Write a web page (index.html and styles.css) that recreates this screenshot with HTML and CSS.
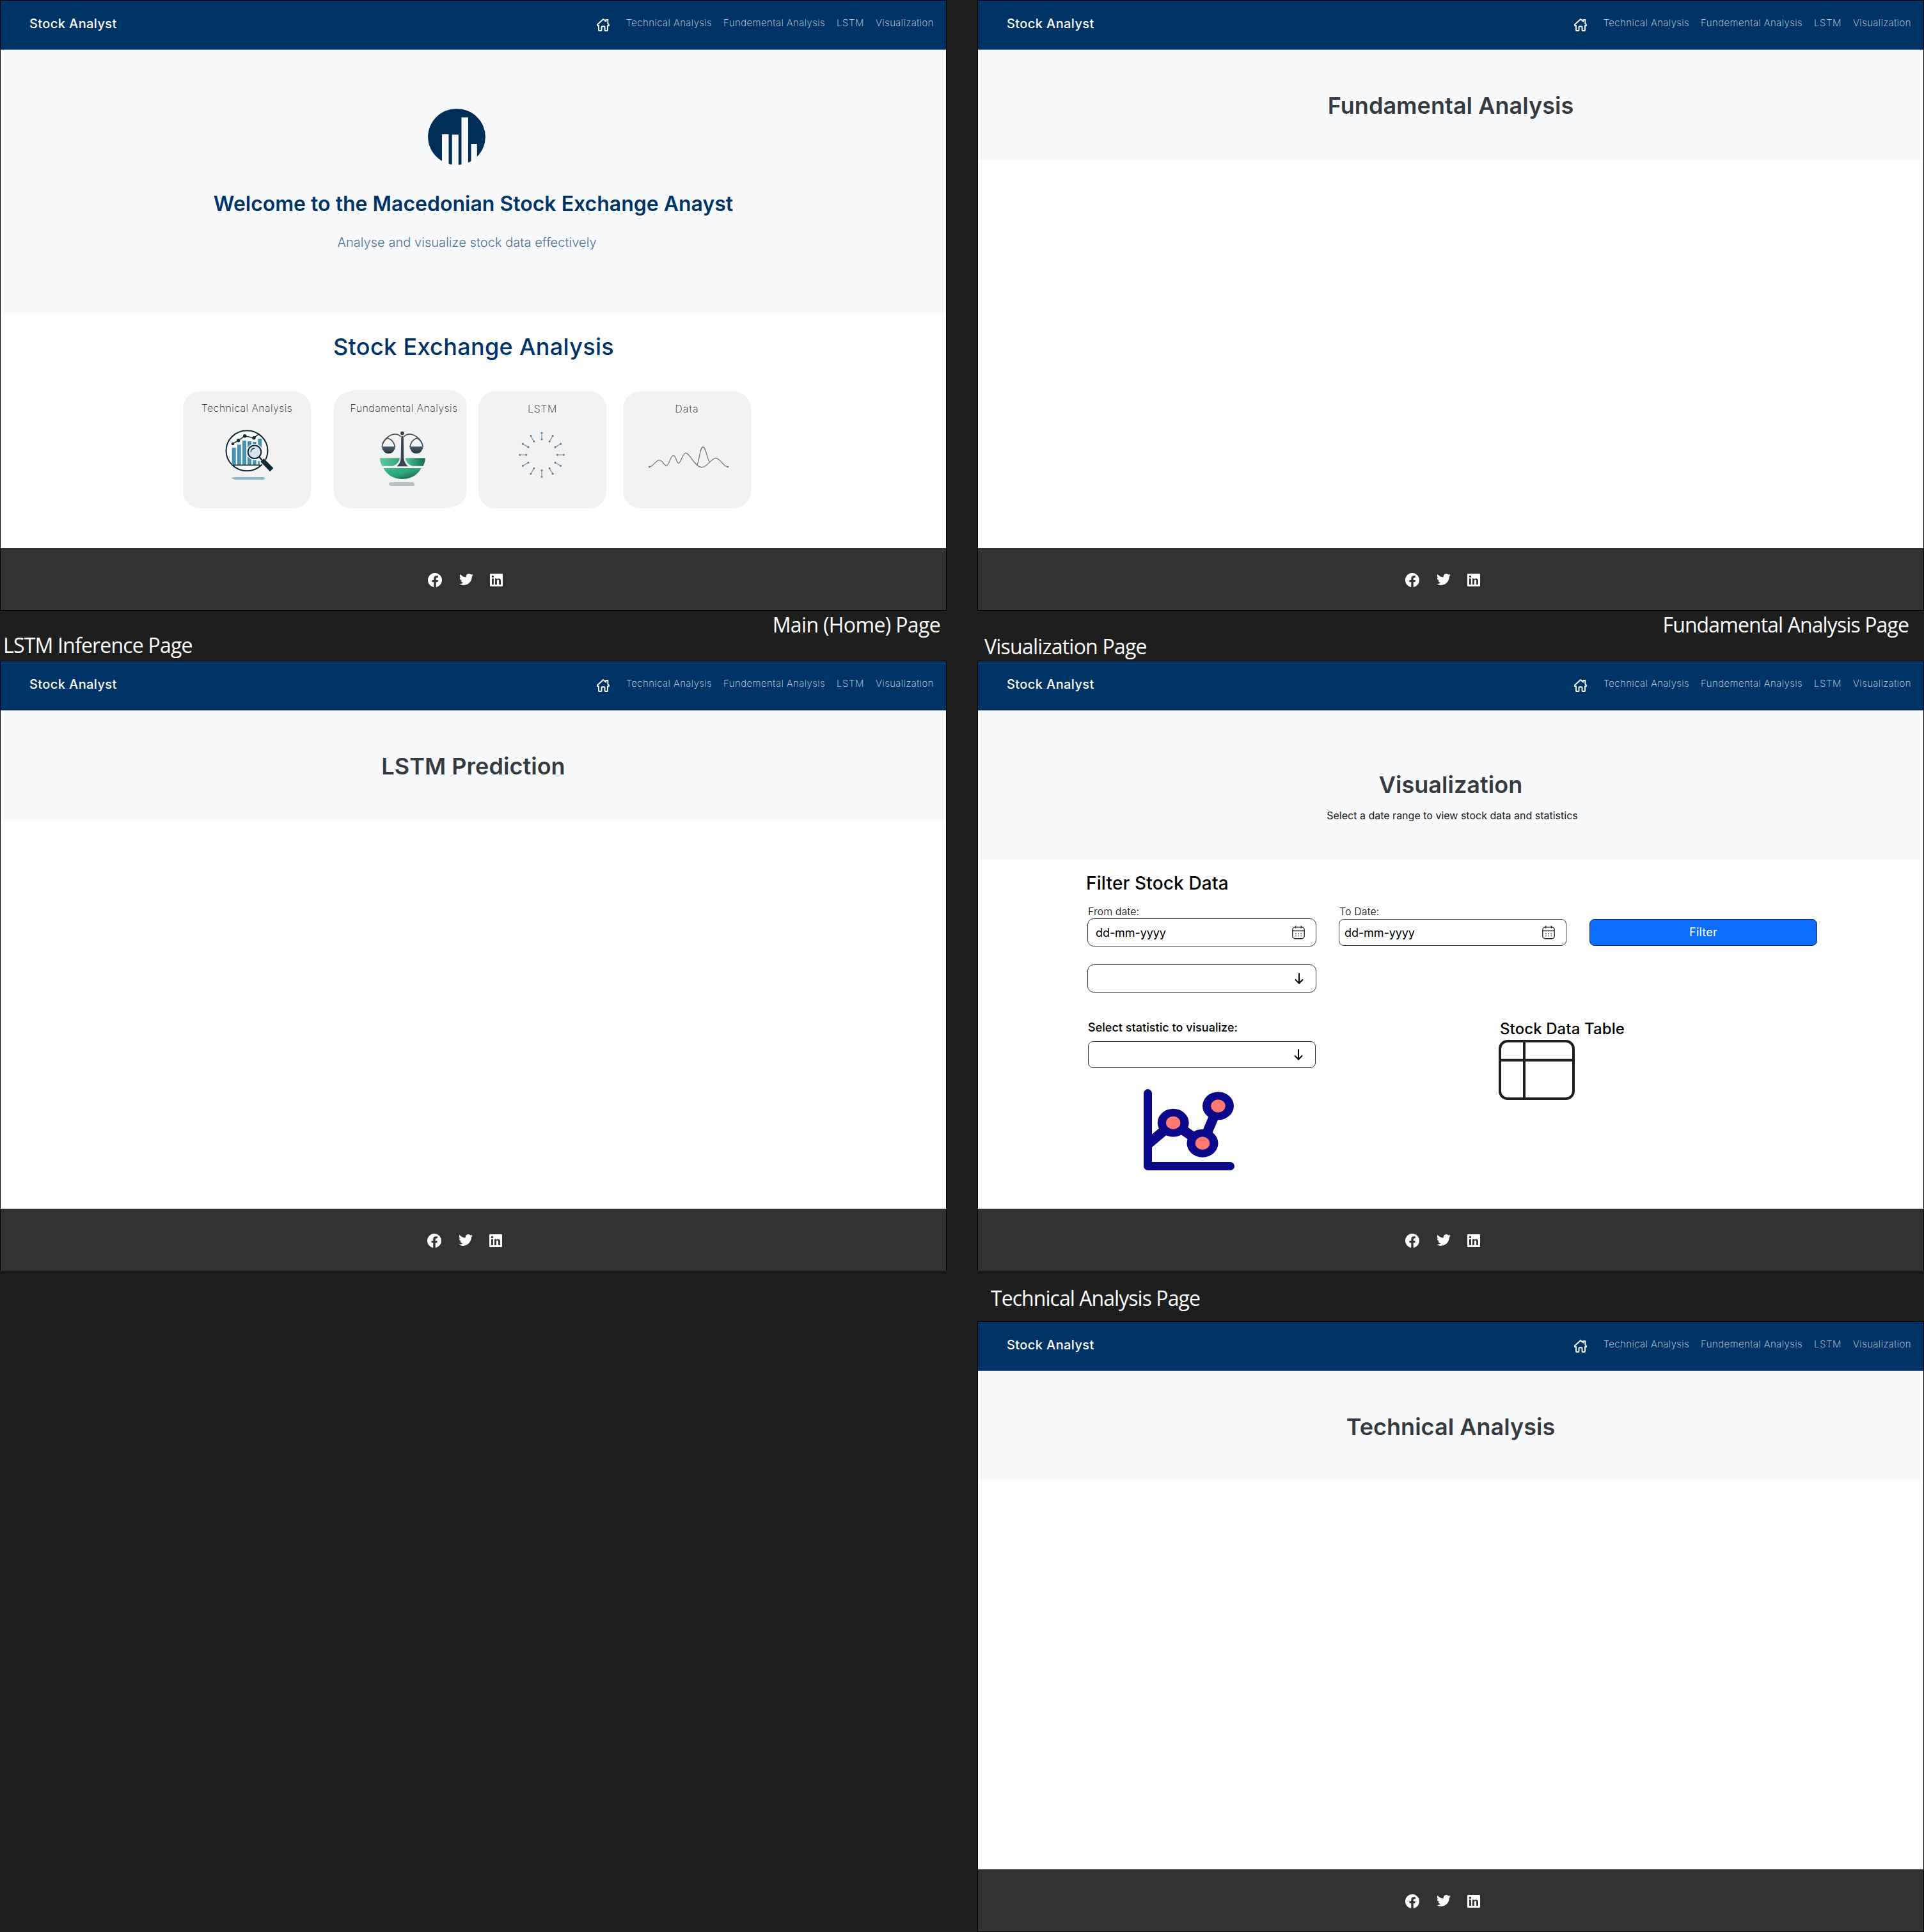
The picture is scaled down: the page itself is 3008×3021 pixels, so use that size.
FILE: index.html
```html
<!DOCTYPE html>
<html lang="en">
<head>
<meta charset="utf-8">
<title>Stock Analyst</title>
<link rel="stylesheet" href="styles.css">
</head>
<body>
<svg class="defs" width="0" height="0" aria-hidden="true">
  <symbol id="home" viewBox="0 0 20 20"><path d="M10.2 1 1 9.300v1.700h2V18q0 1 1 1h2.600q.9 0 .9-.9v-4.900q0-1 1-1h3q1 0 1 1v4.900q0 .9.900.9H16q1 0 1-1v-7h2V9.600L17.300 7.700V2h-3v2.600z" fill="none" stroke="#fff" stroke-width="1.900" stroke-linejoin="round"/></symbol>
  <symbol id="facebook" viewBox="0 0 24 24"><path d="M24 12.070C24 5.400 18.630 0 12 0S0 5.400 0 12.070C0 18.100 4.390 23.100 10.130 24v-8.440H7.080v-3.490h3.050V9.410c0-3.020 1.790-4.690 4.530-4.690 1.310 0 2.680.24 2.680.24v2.970h-1.510c-1.490 0-1.960.93-1.960 1.890v2.250h3.330l-.53 3.490h-2.800V24C19.610 23.100 24 18.100 24 12.070z" fill="#fff"/></symbol>
  <symbol id="twitter" viewBox="0 1.500 24 21"><path d="M23.950 4.570a10 10 0 0 1-2.820.77 4.960 4.960 0 0 0 2.160-2.720c-.95.55-2 .95-3.130 1.180a4.920 4.920 0 0 0-8.380 4.480C7.690 8.090 4.070 6.130 1.640 3.160a4.820 4.820 0 0 0-.67 2.480c0 1.710.87 3.210 2.190 4.090a4.900 4.900 0 0 1-2.230-.61v.06a4.920 4.920 0 0 0 3.950 4.830 5 5 0 0 1-2.210.08 4.940 4.940 0 0 0 4.600 3.420A9.870 9.870 0 0 1 0 19.540a13.990 13.990 0 0 0 7.550 2.210c9.050 0 14-7.500 14-13.980 0-.21 0-.42-.02-.63a9.940 9.940 0 0 0 2.420-2.570z" fill="#fff"/></symbol>
  <symbol id="linkedin" viewBox="0 0 20 20"><rect width="20" height="20" rx="1" fill="#fff"/><path d="M3 7.600h2.900v9.300H3zM8 7.600h2.800v1.300c.5-.9 1.500-1.500 2.800-1.500 2.700 0 3.400 1.700 3.400 4.200v5.300h-2.900v-4.800c0-1.200-.1-2.500-1.500-2.500s-1.700 1.100-1.700 2.400v4.900H8z" fill="#323232"/><circle cx="4.450" cy="4.500" r="1.700" fill="#323232"/></symbol>
  <symbol id="calendar" viewBox="0 0 20 22"><g fill="none" stroke="#2b2f36" stroke-width="1.400"><rect x=".8" y="2.700" width="18.400" height="18" rx="4"/><path d="M1 8.500h18M5.700.5v4M14.300.5v4"/><path d="M5.200 13h10M5.200 16.500h10" stroke-width="1.500" stroke-dasharray="1.500 2.600"/></g></symbol>
  <symbol id="arrow" viewBox="0 0 14 18"><path d="M7 .5v15.500M1 10.500l6 6 6-6" fill="none" stroke="#000" stroke-width="2"/></symbol>
</svg>

<main class="canvas">
  <div class="frame">
    <section class="board">
      <header class="topbar"><span class="brand">Stock Analyst</span><nav class="nav"><svg class="home"><use href="#home"/></svg><a>Technical Analysis</a><a>Fundemental Analysis</a><a class="nav-lstm">LSTM</a><a>Visualization</a></nav></header>
      <div class="welcome">
        <svg class="logo" viewBox="0 0 90 88"><ellipse cx="45" cy="44" rx="44.900" ry="44" fill="#012e57"/><path d="M22 40h10.500v50H22zM37.700 40.500h10.100v50H37.700zM52.500 13.500h10.400v77H52.500zM67.500 55h9.300v36h-9.300z" fill="#f8f9fb"/></svg>
        <h1>Welcome to the Macedonian Stock Exchange Anayst</h1>
        <p>Analyse and visualize stock data effectively</p>
      </div>
      <div class="analysis">
        <h2>Stock Exchange Analysis</h2>
        <div class="cards">
          <article class="card">
            <h3>Technical Analysis</h3>
            <svg viewBox="0 36 200 147">
              <ellipse cx="100" cy="92.800" rx="32.500" ry="31.500" fill="#f8fbfc" stroke="#122836" stroke-width="2"/>
              <path d="M76.700 88h6v27h-6zM85 83.300h5.800V115H85zM93 77h6v38h-6zM101 78h6v37h-6zM109.300 78.700h5.400V115h-5.400zM117.300 74h5.800v28h-5.800zM117.300 109h3v6h-3z" fill="#4391b3"/>
              <path d="M78 115.300h43" stroke="#122836" stroke-width="1.500"/>
              <path d="m78 82 8.700-5.300 10-7 14.300 3 6.700-5.400" fill="none" stroke="#122836" stroke-width="1.500"/>
              <g fill="#122836"><circle cx="78" cy="82" r="2.200"/><circle cx="86.700" cy="76.700" r="2.700"/><circle cx="96.700" cy="69.700" r="2.700"/><circle cx="111" cy="72.700" r="2.700"/></g>
              <path d="m119 102 10.500 12 11 10.500" stroke="#f2f2f2" stroke-width="9" fill="none"/>
              <circle cx="112" cy="94.700" r="12.800" fill="#eef5f8"/>
              <circle cx="112" cy="94.700" r="10.300" fill="#d5e3ea" stroke="#122836" stroke-width="2"/>
              <path d="M106 95a6 6 0 0 1 6-6" fill="none" stroke="#122836" stroke-width="1.300"/>
              <path d="m119 102 5 6" stroke="#122836" stroke-width="2.200"/>
              <path d="m124 107.500 14.800 15.200" stroke="#122836" stroke-width="7.400"/>
              <path d="M75 136q2-2 6-2h43q4 0 4 2t-4 2H81q-2-2-6-2z" fill="#8db5cb"/>
            </svg>
          </article>
          <article class="card card-stacked">
            <h3>Fundamental Analysis</h3>
            <svg viewBox="0 36 200 147">
              <defs>
                <linearGradient id="bowl" x1="0" y1="0" x2="1" y2="1"><stop offset="0" stop-color="#43bb90"/><stop offset=".5" stop-color="#2ba37b"/><stop offset="1" stop-color="#144f40"/></linearGradient>
                <linearGradient id="rimL"><stop offset="0" stop-color="#58c9a1"/><stop offset="1" stop-color="#35a880"/></linearGradient>
                <linearGradient id="rimR"><stop offset="0" stop-color="#4cc397"/><stop offset="1" stop-color="#1a6b54"/></linearGradient>
                <linearGradient id="slate" x1="0" y1="0" x2="0" y2="1"><stop offset="0" stop-color="#4a5f6e"/><stop offset="1" stop-color="#26333e"/></linearGradient>
              </defs>
              <path d="M72 104.300h31q-1 9-11 12.400H75.500Q72 111 72 104.300z" fill="url(#rimL)"/>
              <path d="M142.700 104.300h-31q1 9 11 12.400h16.700q3.300-5.700 3.300-12.400z" fill="url(#rimR)"/>
              <path d="M77.300 120h59.400Q127 137 107 137T77.300 120z" fill="url(#bowl)"/>
              <path d="M105.300 69.700h3.500l.6 34q.6 9 6.900 13.600H98q6.300-4.600 6.700-13.600z" fill="#354653"/>
              <circle cx="107" cy="65.300" r="2.900" fill="#354653"/>
              <g fill="none" stroke="#42545f" stroke-width="1.800">
                <path d="M104.500 70.500C97 63.500 83 67 76.300 82"/><path d="M109.700 70.500C117 63.500 131 67 138 82"/>
                <path d="M75.300 87q.5-10 9-14 10 4 11 14"/><path d="M119 87q1-10 10.500-14 9 4 9.500 14"/>
              </g>
              <path d="M75 86.300h21a10.500 11 0 0 1-21 0zM118.500 86.300h21a10.500 11 0 0 1-21 0z" fill="url(#slate)"/>
              <path d="M86 144q0-2 5-2h32q3 0 2 2 2 1 1 3-1 1-5 1H91q-5 0-5-4z" fill="#b3c2c4"/>
            </svg>
          </article>
          <article class="card">
            <h3 class="card-short">LSTM</h3>
            <svg viewBox="0 36 200 147">
              <defs><g id="spoke"><path d="M0-24.500v-9.500" stroke="#8eabbd" stroke-width="1.600"/><circle cy="-24.300" r="1.500" fill="#61758a"/><circle cy="-34.300" r="1.500" fill="#61758a"/></g></defs>
              <g transform="translate(99 99.300)"><use href="#spoke"/><use href="#spoke" transform="rotate(30)"/><use href="#spoke" transform="rotate(60)"/><use href="#spoke" transform="rotate(90)"/><use href="#spoke" transform="rotate(120)"/><use href="#spoke" transform="rotate(150)"/><use href="#spoke" transform="rotate(180)"/><use href="#spoke" transform="rotate(210)"/><use href="#spoke" transform="rotate(240)"/><use href="#spoke" transform="rotate(270)"/><use href="#spoke" transform="rotate(300)"/><use href="#spoke" transform="rotate(330)"/></g>
            </svg>
          </article>
          <article class="card">
            <h3 class="card-short card-data">Data</h3>
            <svg viewBox="0 36 200 147">
              <path d="M41.300 118C47 118 51 107.700 56.700 107.700S63.500 115.700 68 115.700 74 100.300 78.700 100.300 83.500 112.300 87 112.300 93 96.300 98.300 96.300C104 96.300 113 118.700 122.700 118.700S138 104.300 145 104.300 157 118 164 118M115.300 115.700C119.500 110 120 87 125 87s6.500 20 10.500 23.300" fill="none" stroke="#777" stroke-width="1.300"/>
              <circle cx="41.300" cy="118" r="1.300" fill="#777"/><circle cx="164" cy="118" r="1.300" fill="#777"/>
            </svg>
          </article>
        </div>
      </div>
      <footer class="footer"><svg class="fb"><use href="#facebook"/></svg><svg class="tw"><use href="#twitter"/></svg><svg class="li"><use href="#linkedin"/></svg></footer>
    </section>
    <span class="caption caption-main">Main (Home) Page</span>
  </div>

  <div class="frame">
    <section class="board">
      <header class="topbar"><span class="brand">Stock Analyst</span><nav class="nav"><svg class="home"><use href="#home"/></svg><a>Technical Analysis</a><a>Fundemental Analysis</a><a class="nav-lstm">LSTM</a><a>Visualization</a></nav></header>
      <div class="banner"><h1>Fundamental Analysis</h1></div>
      <footer class="footer"><svg class="fb"><use href="#facebook"/></svg><svg class="tw"><use href="#twitter"/></svg><svg class="li"><use href="#linkedin"/></svg></footer>
    </section>
    <span class="caption caption-fundamental">Fundamental Analysis Page</span>
  </div>

  <div class="frame">
    <section class="board">
      <header class="topbar"><span class="brand">Stock Analyst</span><nav class="nav"><svg class="home"><use href="#home"/></svg><a>Technical Analysis</a><a>Fundemental Analysis</a><a class="nav-lstm">LSTM</a><a>Visualization</a></nav></header>
      <div class="banner"><h1>LSTM Prediction</h1></div>
      <footer class="footer footer-lstm"><svg class="fb"><use href="#facebook"/></svg><svg class="tw"><use href="#twitter"/></svg><svg class="li"><use href="#linkedin"/></svg></footer>
    </section>
    <span class="caption caption-lstm">LSTM Inference Page</span>
  </div>

  <div class="frame">
    <section class="board">
      <header class="topbar"><span class="brand">Stock Analyst</span><nav class="nav"><svg class="home"><use href="#home"/></svg><a>Technical Analysis</a><a>Fundemental Analysis</a><a class="nav-lstm">LSTM</a><a>Visualization</a></nav></header>
      <div class="banner banner-tall"><h1>Visualization</h1><p>Select a date range to view stock data and statistics</p></div>
      <div class="visual">
        <h2>Filter Stock Data</h2>
        <div class="filters">
          <div class="field"><label>From date:</label><div class="input input-large"><span>dd-mm-yyyy</span><svg class="cal"><use href="#calendar"/></svg></div></div>
          <div class="field"><label>To Date:</label><div class="input input-to"><span>dd-mm-yyyy</span><svg class="cal"><use href="#calendar"/></svg></div></div>
          <button class="filter" type="button">Filter</button>
        </div>
        <div class="input input-large select"><svg class="arrow"><use href="#arrow"/></svg></div>
        <div class="results">
          <div class="statistic">
            <h3>Select statistic to visualize:</h3>
            <div class="input select"><svg class="arrow"><use href="#arrow"/></svg></div>
            <svg class="chart" viewBox="0 0 142 127">
              <path d="M6.500 6.500v114h129" stroke="#0b098a" fill="none" stroke-width="13" stroke-linecap="round" stroke-linejoin="round"/>
              <path d="M8 85 46 53l46 32 25-59" stroke="#0b098a" fill="none" stroke-width="15.500"/>
              <g fill="#0b098a"><ellipse cx="46.200" cy="52.700" rx="24.500" ry="22"/><ellipse cx="92" cy="84.700" rx="24.500" ry="22"/><ellipse cx="116.500" cy="26.300" rx="24.500" ry="22"/></g>
              <g fill="#ff7a73"><ellipse cx="46.200" cy="52.700" rx="11.200" ry="10.100"/><ellipse cx="92" cy="84.700" rx="11.200" ry="10.100"/><ellipse cx="116.500" cy="26.300" rx="11.200" ry="10.100"/></g>
            </svg>
          </div>
          <div class="table">
            <h3>Stock Data Table</h3>
            <svg class="grid-icon" viewBox="0 0 119 94"><path d="M2 31.700h115M40 2v90" stroke="#1e1e1e" stroke-width="4"/><rect x="2" y="2" width="115" height="90" rx="12" fill="none" stroke="#1e1e1e" stroke-width="4"/></svg>
          </div>
        </div>
      </div>
      <footer class="footer"><svg class="fb"><use href="#facebook"/></svg><svg class="tw"><use href="#twitter"/></svg><svg class="li"><use href="#linkedin"/></svg></footer>
    </section>
    <span class="caption caption-visual">Visualization Page</span>
  </div>

  <div class="frame frame-technical">
    <section class="board">
      <header class="topbar"><span class="brand">Stock Analyst</span><nav class="nav"><svg class="home"><use href="#home"/></svg><a>Technical Analysis</a><a>Fundemental Analysis</a><a class="nav-lstm">LSTM</a><a>Visualization</a></nav></header>
      <div class="banner"><h1>Technical Analysis</h1></div>
      <footer class="footer"><svg class="fb"><use href="#facebook"/></svg><svg class="tw"><use href="#twitter"/></svg><svg class="li"><use href="#linkedin"/></svg></footer>
    </section>
    <span class="caption caption-technical">Technical Analysis Page</span>
  </div>
</main>
</body>
</html>
```
FILE: styles.css
```css
* { box-sizing: border-box; }
body { margin: 0; background: #1e1e1e; font-family: Inter, sans-serif; }
h1, h2, h3, p { margin: 0; white-space: nowrap; }
svg { display: block; flex: none; }
.defs { position: absolute; }

.canvas {
  display: grid;
  grid-template-columns: 1480px 1480px;
  grid-auto-rows: 955px;
  gap: 78px 48px;
  width: 3008px;
}
.frame { position: relative; }
.frame-technical { grid-column: 2; }
.board {
  display: flex;
  flex-direction: column;
  height: 955px;
  border: 1px solid #000;
  background: #fff;
}

/* Artboard labels on the open canvas */
.caption {
  position: absolute;
  color: #fff;
  font: 400 32px/40px "Open Sans", sans-serif;
  white-space: nowrap;
}
.caption-main { right: 10px; top: 957px; letter-spacing: -0.64px; }
.caption-fundamental { right: 24px; top: 957px; letter-spacing: -0.9px; }
.caption-lstm { left: 5px; top: -44px; letter-spacing: -0.8px; }
.caption-visual { left: 11px; top: -42px; letter-spacing: -0.78px; }
.caption-technical { left: 21px; top: -56px; letter-spacing: -0.95px; }

.topbar {
  display: flex;
  justify-content: space-between;
  align-items: flex-start;
  height: 77px;
  padding: 24px 19px 0 45px;
  background: #003366;
  border-bottom: 1px solid #507196;
  color: #fff;
}
.brand { font-size: 20px; line-height: 24px; font-weight: 500; letter-spacing: 0.4px; }
.nav { display: flex; gap: 18px; }
.nav a {
  margin-top: 1px;
  color: #d9e0e8;
  font-size: 15px;
  line-height: 20px;
  font-weight: 200;
  letter-spacing: 0.42px;
}
.nav .nav-lstm { letter-spacing: 0.6px; }
.home { width: 20px; height: 20px; margin: 4px 8px 0 0; }

.welcome {
  display: flex;
  flex-direction: column;
  align-items: center;
  height: 413px;
  padding-top: 92px;
  background: #f8f9fb;
}
.logo { width: 90px; height: 88px; margin-right: 53px; }
.welcome h1 { margin-top: 41px; color: #003366; font-size: 32px; line-height: 40px; font-weight: 600; }
.welcome p { margin: 28px 20px 0 0; color: #4d7096; font-size: 20px; line-height: 24px; font-weight: 300; letter-spacing: 0.05px; }

.analysis { padding: 29px 0 0 285px; }
.analysis h2 { margin-left: 235px; color: #003366; font-size: 36px; line-height: 44px; font-weight: 500; letter-spacing: 0.33px; }
.cards { display: flex; gap: 26px; margin-top: 48px; }
.card {
  display: flex;
  flex-direction: column;
  align-items: center;
  width: 200px;
  height: 183px;
  padding-top: 16px;
  border-radius: 27px;
  background: #f2f2f2;
}
.card h3 { color: #222; font-size: 16px; line-height: 20px; font-weight: 200; letter-spacing: 0.4px; }
.card .card-short { position: relative; top: 1px; letter-spacing: 0.67px; }
.card .card-data { letter-spacing: 1.1px; }
.card svg { width: 200px; height: 147px; }
.card-stacked { margin-left: 10px; box-shadow: 8px -2px 0 #f2f2f2; }
.card-stacked h3 { margin-left: 19px; }

.banner {
  height: 172px;
  padding-top: 65px;
  background: #f8f9fb;
  color: #343a40;
  text-align: center;
}
.banner h1 { font-size: 36px; line-height: 44px; font-weight: 600; letter-spacing: 0.04px; }
.banner-tall { height: 233px; padding-top: 94px; }
.banner p { margin: 16px -5px 0 0; color: #16191c; font-size: 16px; line-height: 20px; }

.visual { padding: 20px 0 0 171px; color: #000; }
.visual h2 { margin-left: -2px; font-size: 28px; line-height: 34px; font-weight: 500; letter-spacing: 0.15px; }
.filters { display: grid; grid-template-columns: 358px 356px 356px; gap: 35px; margin-top: 17px; }
.field label { display: block; padding: 0 0 1px 1px; font-size: 16px; line-height: 20px; font-weight: 300; letter-spacing: 0.1px; }
.input {
  display: flex;
  align-items: center;
  justify-content: space-between;
  width: 356px;
  height: 42px;
  padding: 0 17px 0 8px;
  border: 1px solid #333;
  border-radius: 8px;
  background: #fff;
  font-size: 18px;
  letter-spacing: -0.08px;
}
.input-large { width: 358px; height: 44px; padding-left: 12px; border-radius: 10px; }
.input-to { margin-top: 1px; }
.cal { width: 20px; height: 22px; }
.filter {
  align-self: start;
  width: 356px;
  height: 42px;
  margin: 22px 0 0 1px;
  padding: 0;
  border: 1px solid #10243f;
  border-radius: 8px;
  background: #0d6efd;
  color: #fff;
  font: 400 18px/40px Inter, sans-serif;
  letter-spacing: 0.2px;
}
.select { justify-content: flex-end; padding-right: 19px; }
.visual > .select { margin-top: 28px; }
.arrow { width: 14px; height: 18px; }
.results { display: grid; grid-template-columns: 643px auto; margin-top: 42px; }
.statistic h3 { margin: 2px 0 10px 1px; font-size: 18px; line-height: 22px; font-weight: 500; letter-spacing: 0.03px; }
.statistic .select { margin-left: 1px; }
.chart { width: 142px; height: 127px; margin: 33px 0 0 88px; }
.table h3 { margin-left: 2px; font-size: 24px; line-height: 30px; font-weight: 500; letter-spacing: 0.1px; }
.grid-icon { width: 119px; height: 94px; margin-top: 2px; }

.footer {
  display: flex;
  height: 97px;
  margin-top: auto;
  padding: 39px 0 0 668px;
  background: #323232;
}
.footer-lstm { padding-left: 667px; }
.fb { width: 22px; height: 22px; }
.tw { width: 22px; height: 20px; margin: 0 26px 0 27px; }
.li { width: 20px; height: 20px; margin-top: 1px; }
```
